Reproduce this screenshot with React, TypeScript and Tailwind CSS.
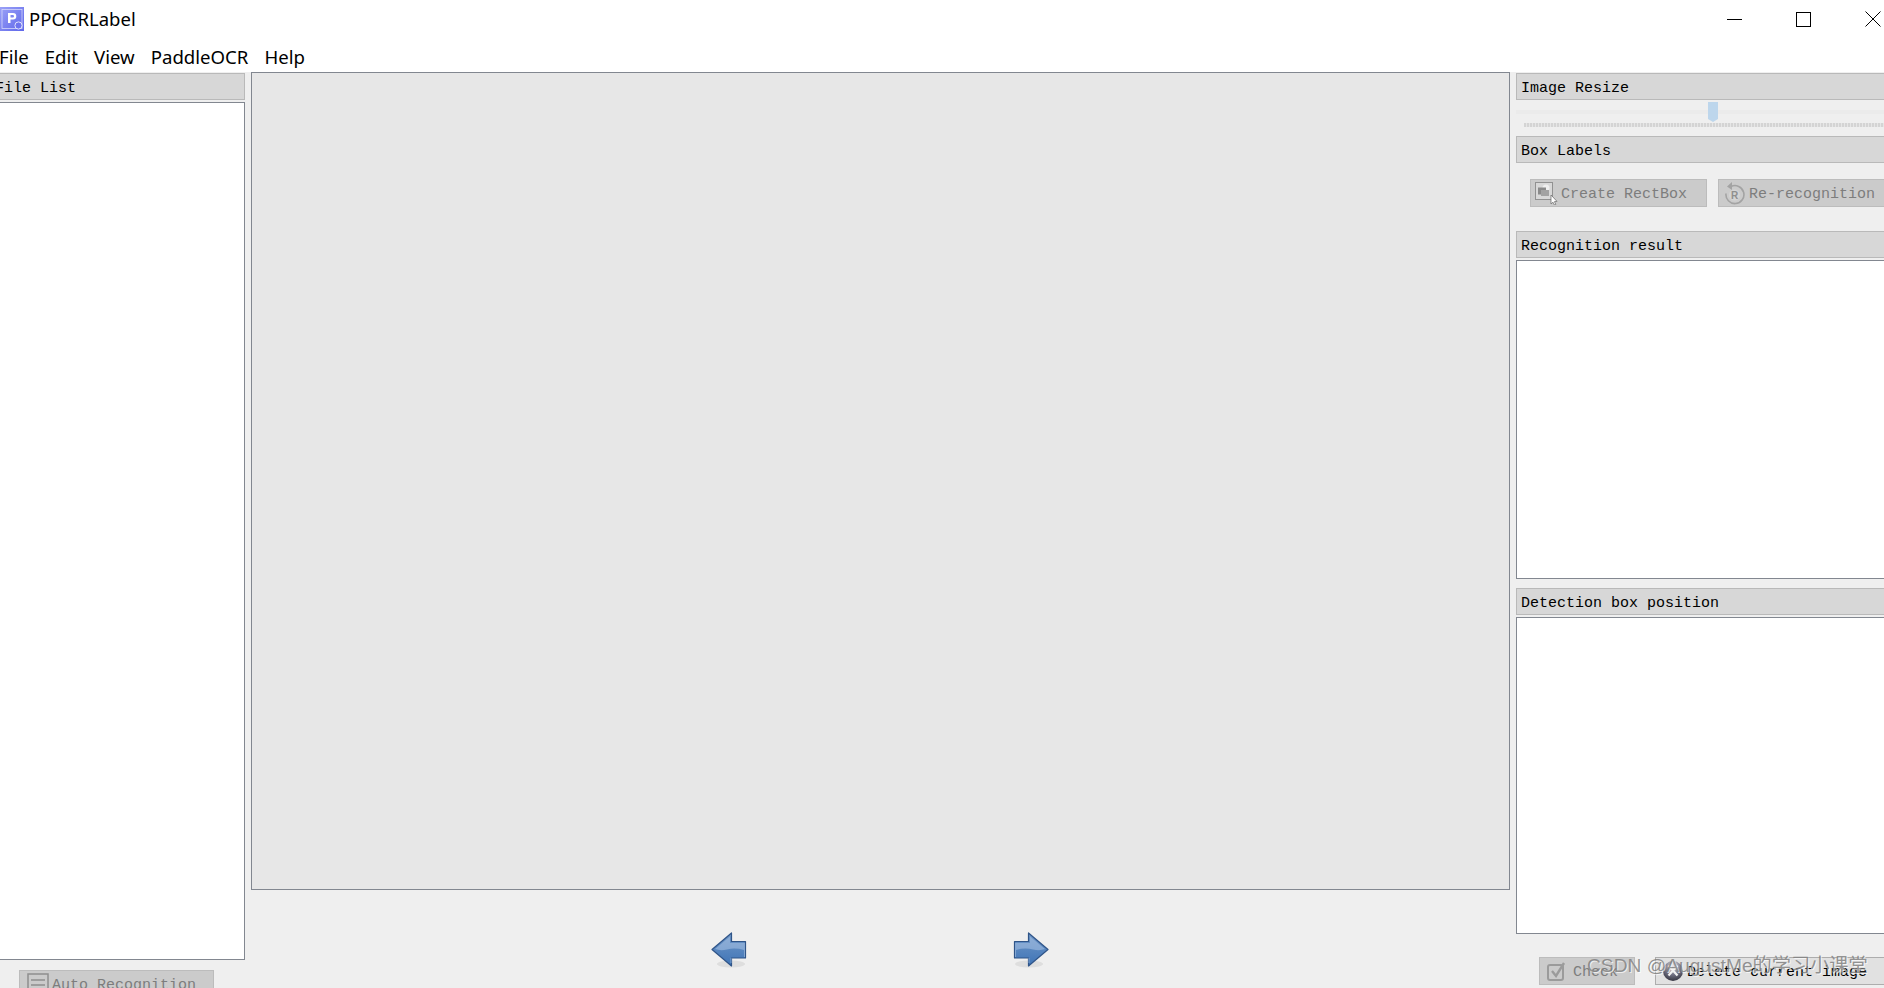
const mono = "font-['Liberation_Mono',monospace]";

function AppIcon() {
  return (
    <svg width="24" height="24" viewBox="0 0 24 24">
      <defs>
        <linearGradient id="appBg" x1="0" y1="0" x2="1" y2="1">
          <stop offset="0" stopColor="#9aa1f7" />
          <stop offset="1" stopColor="#5f67ea" />
        </linearGradient>
      </defs>
      <rect width="24" height="24" fill="url(#appBg)" />
      <rect x="2" y="2.5" width="20" height="19" fill="none" stroke="#d5d8fb" strokeWidth="0.8" />
      <path d="M8 16V6h5a3.3 3.3 0 0 1 0 6.6h-2.5V16z M10.5 8.1v2.4h2.3a1.2 1.2 0 0 0 0-2.4z" fill="#fff" fillRule="evenodd" />
      <circle cx="18.5" cy="18.5" r="3.6" fill="#6d74ee" stroke="#e4e6fd" strokeWidth="1" />
    </svg>
  );
}

function DockHeader({ title, className = "" }: { title: string; className?: string }) {
  return (
    <div className={`h-[27px] shrink-0 bg-[#d7d7d7] border border-[#b9b9b9] flex items-center pt-[5px] text-[15px] text-black ${mono} ${className}`}>
      {title}
    </div>
  );
}

function ToolButton({ label, icon, className = "", disabled = true }: { label: string; icon: React.ReactNode; className?: string; disabled?: boolean }) {
  return (
    <div className={`h-[28px] shrink-0 flex items-center gap-[3px] border text-[15px] whitespace-nowrap overflow-hidden ${mono} ${disabled ? "bg-[#cbcbcb] border-[#bcbcbc] text-[#7d7d7d]" : "bg-[#e1e1e1] border-[#adadad] text-black"} ${className}`}>
      {icon}
      <span className="pt-[5px]">{label}</span>
    </div>
  );
}

function NavArrow({ dir }: { dir: "left" | "right" }) {
  const id = `arrow-${dir}`;
  return (
    <svg width="36" height="38" viewBox="0 0 36 38" className={dir === "left" ? "" : "-scale-x-100"}>
      <defs>
        <linearGradient id={id} x1="0" y1="0" x2="0" y2="1">
          <stop offset="0" stopColor="#6f97c8" />
          <stop offset="1" stopColor="#3f74b6" />
        </linearGradient>
      </defs>
      <ellipse cx="20" cy="32" rx="14" ry="3.5" fill="#000" opacity="0.07" />
      <path d="M1 17.5 L20.5 1 V9.5 H34.5 V26 H20.5 V34 Z" fill={`url(#${id})`} stroke="#2f5488" strokeWidth="1.2" strokeLinejoin="round" />
      <path d="M4 17 L19 4.5 V11 H33 V18 Q24 15.5 16 17.5 Q9 19 4 17 Z" fill="#a9c3e3" opacity="0.55" />
      <path d="M33.5 11 V25 M20 26 V31" stroke="#8fb0d8" strokeWidth="0.8" fill="none" />
    </svg>
  );
}

export default function App() {
  return (
    <div className="w-[1884px] h-[988px] overflow-hidden flex flex-col bg-[#efefef]">
      {/* title bar */}
      <div className="h-[38px] shrink-0 bg-white flex items-center relative">
        <AppIcon />
        <span className="ml-[5px] text-[18.5px] text-black font-['Noto_Sans',sans-serif]">PPOCRLabel</span>
        <div className="ml-auto flex items-center text-black">
          <div className="w-[15px] h-px bg-black mr-[54px]" />
          <div className="w-[15px] h-[15px] border border-black mr-[54px]" />
          <svg width="16" height="16" viewBox="0 0 16 16" className="mr-[3px]">
            <path d="M0.5 0.5 L15.5 15.5 M15.5 0.5 L0.5 15.5" stroke="#000" strokeWidth="1" />
          </svg>
        </div>
      </div>

      {/* menu bar */}
      <div className="h-[34px] shrink-0 bg-white flex items-center gap-[16px] pt-[4px] -ml-px text-[18.6px] text-black font-['Noto_Sans',sans-serif]">
        <span>File</span>
        <span>Edit</span>
        <span>View</span>
        <span>PaddleOCR</span>
        <span>Help</span>
      </div>

      <div className="flex-1 flex min-h-0">
        {/* file list */}
        <div className="w-[245px] shrink-0 flex flex-col pt-px">
          <DockHeader title="File List" className="-ml-[5px] border-l-0" />
          <div className="mt-[2px] h-[858px] shrink-0 bg-white border border-l-0 border-[#828790]" />
          <div className="mt-[10px] ml-[19px] w-[195px] shrink-0">
            <ToolButton
              label="Auto Recognition"
              className="w-full pl-[7px]"
              icon={
                <svg width="22" height="22" viewBox="0 0 22 22" className="shrink-0">
                  <rect x="1" y="1" width="20" height="20" fill="none" stroke="#8f8f8f" strokeWidth="1.5" />
                  <path d="M4 7h14M4 12h14" stroke="#8f8f8f" strokeWidth="1.5" />
                </svg>
              }
            />
          </div>
        </div>

        {/* canvas */}
        <div className="w-[1259px] shrink-0 ml-[6px] flex flex-col">
          <div className="h-[818px] shrink-0 bg-[#e7e7e7] border border-[#828790]" />
          <div className="flex-1 flex items-start pt-[42px] pl-[460px] gap-[266px]">
            <NavArrow dir="left" />
            <NavArrow dir="right" />
          </div>
        </div>

        {/* right docks */}
        <div className="flex-1 ml-[6px] flex flex-col pt-px min-w-0 overflow-hidden">
          <DockHeader title="Image Resize" className="pl-[4px] border-r-0" />
          <div className="h-[36px] shrink-0 relative">
            <div className="absolute left-0 right-0 top-[10px] h-[4px] bg-[#ebebeb]" />
            <div className="absolute left-[192px] top-[2px] w-[10px] h-[20px] bg-[#bdd6ec] [clip-path:polygon(0_0,100%_0,100%_85%,50%_100%,0_85%)]" />
            <div className="absolute left-[8px] right-0 top-[23px] h-[4px] bg-[repeating-linear-gradient(90deg,#d4d4d4_0,#d4d4d4_2px,#e6e6e6_2px,#e6e6e6_3px)]" />
          </div>
          <DockHeader title="Box Labels" className="pl-[4px] border-r-0" />
          <div className="h-[68px] shrink-0 flex items-start pt-[16px] pl-[14px] gap-[11px]">
            <ToolButton
              label="Create RectBox"
              className="w-[177px] pl-[4px]"
              icon={
                <svg width="23" height="24" viewBox="0 0 23 24" className="shrink-0">
                  <rect x="0.5" y="1.5" width="17" height="17" fill="#d8d8d8" stroke="#fff" strokeWidth="1" />
                  <rect x="0.5" y="1.5" width="17" height="17" fill="none" stroke="#222" strokeWidth="1" strokeDasharray="1 1" />
                  <circle cx="11" cy="7" r="3.5" fill="#efefef" />
                  <rect x="3" y="6.5" width="8" height="7" fill="#8a8a8a" />
                  <rect x="6" y="9" width="8" height="6" fill="#a2a2a2" />
                  <path d="M16 14v9l2-1.8 1.4 2.8 1.4-.7-1.4-2.7 2.6-.2z" fill="#fff" stroke="#666" strokeWidth="0.7" />
                </svg>
              }
            />
            <ToolButton
              label="Re-recognition"
              className="w-[180px] pl-[5px] gap-[4px] border-r-0"
              icon={
                <svg width="21" height="24" viewBox="0 0 21 24" className="shrink-0">
                  <path d="M7 5.5A9 9 0 1 1 2 12.5" fill="none" stroke="#a3a3a3" strokeWidth="1.6" />
                  <path d="M8 1L3 5.5 8 9z" fill="#a3a3a3" />
                  <circle cx="10.5" cy="14" r="5.5" fill="#d4d4d4" />
                  <text x="10.5" y="18" textAnchor="middle" fontSize="10" fontWeight="700" fill="#8f8f8f" fontFamily="Liberation Sans">R</text>
                </svg>
              }
            />
          </div>
          <DockHeader title="Recognition result" className="pl-[4px] border-r-0" />
          <div className="mt-[2px] h-[319px] shrink-0 bg-white border border-r-0 border-[#828790]" />
          <DockHeader title="Detection box position" className="mt-[9px] pl-[4px] border-r-0" />
          <div className="mt-[2px] h-[317px] shrink-0 bg-white border border-r-0 border-[#828790]" />
          <div className="mt-[23px] pl-[23px] flex gap-[20px]">
            <ToolButton
              label="Check"
              className="w-[96px] pl-[6px] gap-[5px]"
              icon={
                <svg width="22" height="22" viewBox="0 0 22 22" className="shrink-0">
                  <rect x="2" y="5" width="15" height="15" rx="2" fill="none" stroke="#9b9b9b" strokeWidth="2" />
                  <path d="M6 11l4 5 8-13" fill="none" stroke="#9b9b9b" strokeWidth="2.4" />
                </svg>
              }
            />
            <ToolButton
              label="Delete current image"
              disabled={false}
              className="w-[229px] pl-[6px] border-r-0"
              icon={
                <svg width="22" height="22" viewBox="0 0 22 22" className="shrink-0">
                  <defs>
                    <radialGradient id="delBg" cx="0.5" cy="0.25" r="0.8">
                      <stop offset="0" stopColor="#e8e8ee" />
                      <stop offset="0.5" stopColor="#77778a" />
                      <stop offset="1" stopColor="#2d2d38" />
                    </radialGradient>
                  </defs>
                  <circle cx="11" cy="11" r="10" fill="url(#delBg)" />
                  <path d="M6.5 5.5l9 10M15.5 5.5l-9 10" stroke="#f2f2f2" strokeWidth="2.2" />
                </svg>
              }
            />
          </div>
        </div>
      </div>

      {/* CSDN watermark over the bottom buttons */}
      <div className="absolute left-[1587px] top-[954px] text-[19.2px] leading-[24px] whitespace-nowrap text-[#7a7a7a]/80 font-['Liberation_Sans','Noto_Sans_CJK_SC',sans-serif] [text-shadow:1px_1px_0_#ffffffb0]">
        CSDN @AugustMe的学习小课堂
      </div>
    </div>
  );
}
